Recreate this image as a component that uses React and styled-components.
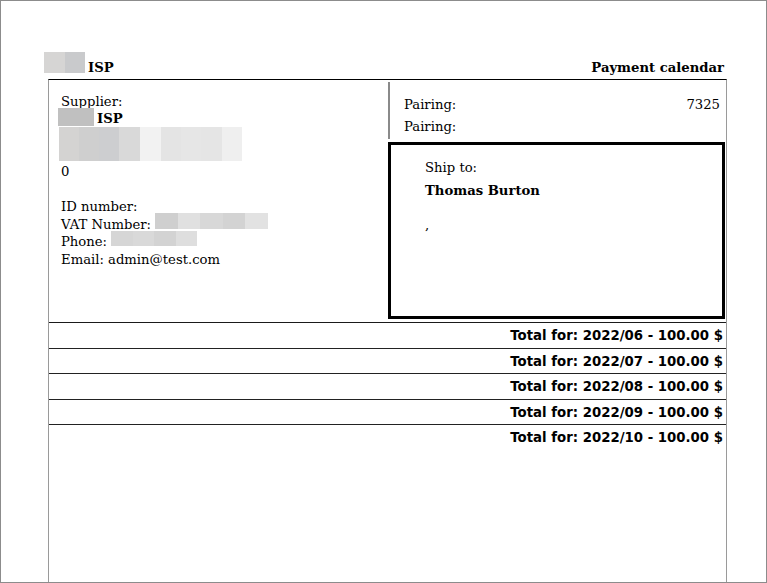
import React from "react";
import styled, { createGlobalStyle } from "styled-components";

const GlobalStyle = createGlobalStyle`
  html, body {
    margin: 0;
    padding: 0;
    background: #fff;
  }
  body {
    font-family: "DejaVu Serif", "Liberation Serif", serif;
    font-size: 13.2px;
    color: #000;
  }
`;

const Page = styled.div`
  box-sizing: border-box;
  width: 767px;
  height: 583px;
  border: 1px solid #8c8c8c;
  padding: 51px 39px 0 47px;
  display: flex;
  flex-direction: column;
  overflow: hidden;
`;

const Header = styled.div`
  height: 27px;
  margin-left: -4px;
  padding-right: 3px;
  display: flex;
  align-items: flex-start;
  justify-content: space-between;
`;

const Brand = styled.div`
  display: flex;
  align-items: flex-start;
`;

const Title = styled.div`
  font-weight: bold;
  font-size: 13.2px;
  line-height: 18px;
  padding-top: 7px;
`;

// pixelated (blurred-out) strip of cells
const Blur = styled.div`
  display: flex;
  flex: none;
  height: ${(p) => p.$h}px;
  margin-left: ${(p) => p.$ml || 0}px;
  margin-right: ${(p) => p.$mr || 0}px;
  margin-top: ${(p) => p.$mt || 0}px;
  align-self: flex-start;
`;

const Cell = styled.span`
  display: block;
  width: ${(p) => p.$w}px;
  height: 100%;
  background: ${(p) => p.$c};
`;

const Frame = styled.div`
  flex: 1;
  border-top: 1px solid #000;
  border-left: 1px solid #9a9a9a;
  border-right: 1px solid #9a9a9a;
  display: flex;
  flex-direction: column;
`;

const TopSection = styled.div`
  display: flex;
  height: 242px;
  border-bottom: 1px solid #1a1a1a;
`;

const SupplierCol = styled.div`
  width: 339px;
  box-sizing: border-box;
  padding: 13px 0 0 12px;
`;

const Line = styled.div`
  display: flex;
  align-items: center;
  height: ${(p) => p.$h || 17.6}px;
  line-height: ${(p) => p.$h || 17.6}px;
  white-space: pre;
  font-weight: ${(p) => (p.$bold ? "bold" : "normal")};
`;

const Gap = styled.div`
  height: ${(p) => p.$h}px;
`;

const RightCol = styled.div`
  flex: 1;
  padding: 2px 1px 3px 0;
  display: flex;
  flex-direction: column;
`;

const Info = styled.div`
  height: 57px;
  box-sizing: border-box;
  border-left: 2px solid #8a8a8a;
  padding: 12px 5px 0 14px;
`;

const InfoRow = styled.div`
  display: flex;
  justify-content: space-between;
  line-height: 22px;
`;

const ShipBox = styled.div`
  margin-top: 3px;
  height: 177px;
  box-sizing: border-box;
  border: 3px solid #000;
  padding: 12px 10px 0 34px;
`;

const ShipLine = styled.div`
  line-height: 22px;
  margin-top: ${(p) => p.$mt || 0}px;
  font-weight: ${(p) => (p.$bold ? "bold" : "normal")};
`;

const TotalRow = styled.div`
  height: 23.5px;
  line-height: 23.5px;
  padding-top: 1px;
  box-sizing: content-box;
  text-align: right;
  padding-right: 3px;
  font-family: "DejaVu Sans", "Liberation Sans", sans-serif;
  font-weight: bold;
  font-size: 13.3px;
  border-bottom: ${(p) => (p.$last ? "none" : "1px solid #222")};
`;

const logoCells = [
  { w: 21, c: "#d6d5d4" },
  { w: 20, c: "#c9cacc" },
];

const addressCells = [
  { w: 20, c: "#d4d3d2" },
  { w: 20, c: "#cfcfcf" },
  { w: 20, c: "#cdced0" },
  { w: 21, c: "#d9d9d9" },
  { w: 21, c: "#f2f2f2" },
  { w: 20, c: "#e4e4e4" },
  { w: 20, c: "#e6e6e6" },
  { w: 21, c: "#e5e5e5" },
  { w: 20, c: "#efefef" },
];

const vatCells = [
  { w: 23, c: "#cfcfcf" },
  { w: 22, c: "#e0e0e0" },
  { w: 23, c: "#d8d8d8" },
  { w: 22, c: "#d3d3d3" },
  { w: 23, c: "#e2e2e2" },
];

const phoneCells = [
  { w: 22, c: "#d6d6d6" },
  { w: 21, c: "#d9d9d9" },
  { w: 22, c: "#d3d3d3" },
  { w: 21, c: "#dedede" },
];

const totals = ["2022/06", "2022/07", "2022/08", "2022/09", "2022/10"];

const cells = (list) => list.map((c, i) => <Cell key={i} $w={c.w} $c={c.c} />);

export default function App() {
  return (
    <>
      <GlobalStyle />
      <Page>
        <Header>
          <Brand>
            <Blur $h={21} $mr={3}>{cells(logoCells)}</Blur>
            <Title>ISP</Title>
          </Brand>
          <Title>Payment calendar</Title>
        </Header>

        <Frame>
          <TopSection>
            <SupplierCol>
              <Line $h={17}>Supplier:</Line>
              <Line $h={17} $bold>
                <Blur $h={18} $ml={-3} $mr={3} $mt={-2}>
                  <Cell $w={36} $c="#c0c0c0" />
                </Blur>
                ISP
              </Line>
              <Blur $h={34} $ml={-2}>{cells(addressCells)}</Blur>
              <Gap $h={2} />
              <Line $h={18}>0</Line>
              <Gap $h={17} />
              <Line>ID number:</Line>
              <Line>
                VAT Number:{" "}
                <Blur $h={16} $mt={-3}>{cells(vatCells)}</Blur>
              </Line>
              <Line>
                Phone:{" "}
                <Blur $h={15} $mt={-2}>{cells(phoneCells)}</Blur>
              </Line>
              <Line>Email: admin@test.com</Line>
            </SupplierCol>

            <RightCol>
              <Info>
                <InfoRow>
                  <span>Pairing:</span>
                  <span>7325</span>
                </InfoRow>
                <InfoRow>
                  <span>Pairing:</span>
                </InfoRow>
              </Info>
              <ShipBox>
                <ShipLine>Ship to:</ShipLine>
                <ShipLine $bold $mt={1}>Thomas Burton</ShipLine>
                <ShipLine $mt={12}>,</ShipLine>
              </ShipBox>
            </RightCol>
          </TopSection>

          {totals.map((m, i) => (
            <TotalRow key={m} $last={i === totals.length - 1}>
              Total for: {m} - 100.00 $
            </TotalRow>
          ))}
        </Frame>
      </Page>
    </>
  );
}
